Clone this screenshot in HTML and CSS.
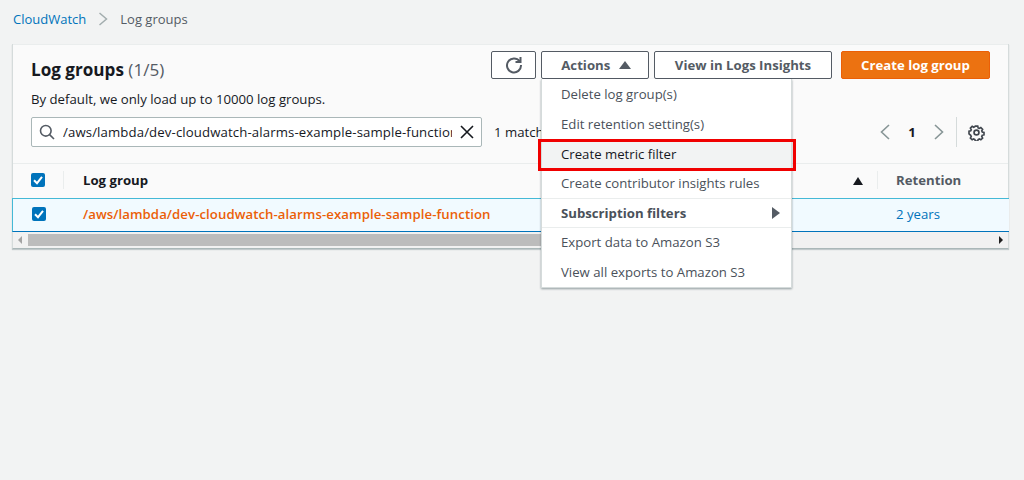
FILE: index.html
```html
<!DOCTYPE html>
<html>
<head>
    <title>Log groups</title>
    <link rel="stylesheet" href="styles.css">
</head>
<body>
    <nav class="crumbs">
        <a href="#">CloudWatch</a>
        <svg class="crumb-sep" width="10" height="14" viewBox="0 0 10 14"><path d="M1.5 1l7 6-7 6" fill="none" stroke="#a3adae" stroke-width="1.5"/></svg>
        <span>Log groups</span>
    </nav>

    <section class="panel">
        <div class="panel-head">
            <div class="title-row">
                <h1>Log groups <span class="count">(1/5)</span></h1>
                <div class="actions">
                    <button class="btn btn-icon">
                        <svg width="18" height="18" viewBox="0 0 18 18"><path d="M14.6 5.2A7 7 0 1 0 16 9" fill="none" stroke="#545b64" stroke-width="2"/><path d="M15.5 1v5h-5" fill="none" stroke="#545b64" stroke-width="2"/></svg>
                    </button>
                    <div class="menu-wrap">
                        <button class="btn btn-actions">Actions <span class="tri-up"></span></button>
                        <ul class="menu">
                            <li>Delete log group(s)</li>
                            <li>Edit retention setting(s)</li>
                            <li class="hover">Create metric filter<span class="red-box"></span></li>
                            <li>Create contributor insights rules</li>
                            <li class="sub">Subscription filters <span class="tri-right"></span></li>
                            <li>Export data to Amazon S3</li>
                            <li>View all exports to Amazon S3</li>
                        </ul>
                    </div>
                    <button class="btn btn-insights">View in Logs Insights</button>
                    <button class="btn btn-primary">Create log group</button>
                </div>
            </div>
            <p class="desc">By default, we only load up to 10000 log groups.</p>
            <div class="filter-row">
                <div class="search">
                    <svg width="16" height="16" viewBox="0 0 16 16"><circle cx="6.8" cy="6.8" r="5.3" fill="none" stroke="#545b64" stroke-width="1.6"/><path d="M10.6 10.6L15 15" stroke="#545b64" stroke-width="1.6"/></svg>
                    <span class="search-text">/aws/lambda/dev-cloudwatch-alarms-example-sample-function</span>
                    <svg width="14" height="14" viewBox="0 0 14 14"><path d="M1 1l12 12M13 1L1 13" stroke="#16191f" stroke-width="1.6"/></svg>
                </div>
                <span class="matches">1 match</span>
                <div class="pager">
                    <svg width="12" height="16" viewBox="0 0 12 16"><path d="M10 1L2.5 8l7.5 7" fill="none" stroke="#879596" stroke-width="1.6"/></svg>
                    <span class="page">1</span>
                    <svg width="12" height="16" viewBox="0 0 12 16"><path d="M2 1l7.5 7L2 15" fill="none" stroke="#879596" stroke-width="1.6"/></svg>
                    <span class="pager-sep"></span>
                    <svg width="17" height="17" viewBox="0 0 16 16"><circle cx="8" cy="8" r="2.3" fill="none" stroke="#3f454d" stroke-width="1.6"/><path d="M6.6 1h2.8l.4 1.9 1.3.6 1.7-1 2 2-1 1.7.6 1.3 1.9.4v2.8l-1.9.4-.6 1.3 1 1.7-2 2-1.7-1-1.3.6-.4 1.9H6.6l-.4-1.9-1.3-.6-1.7 1-2-2 1-1.7-.6-1.3L-.3 9.4V6.6l1.9-.4.6-1.3-1-1.7 2-2 1.7 1 1.3-.6z" transform="translate(1.2 1.2) scale(.85)" fill="none" stroke="#3f454d" stroke-width="1.8"/></svg>
                </div>
            </div>
        </div>

        <div class="table-head">
            <div class="cell-check"><span class="checkbox"><svg width="14" height="14" viewBox="0 0 14 14"><path d="M3 7.2l3 3 5-6.4" fill="none" stroke="#fff" stroke-width="2"/></svg></span></div>
            <div class="cell-name has-sep">Log group</div>
            <div class="cell-sort"><span class="tri-up dark"></span></div>
            <div class="cell-ret has-sep">Retention</div>
        </div>
        <div class="table-row">
            <div class="cell-check"><span class="checkbox"><svg width="14" height="14" viewBox="0 0 14 14"><path d="M3 7.2l3 3 5-6.4" fill="none" stroke="#fff" stroke-width="2"/></svg></span></div>
            <div class="cell-name"><a class="group-link" href="#">/aws/lambda/dev-cloudwatch-alarms-example-sample-function</a></div>
            <div class="cell-sort"></div>
            <div class="cell-ret"><a href="#">2 years</a></div>
        </div>
        <div class="scrollbar">
            <span class="arrow-left"></span>
            <span class="thumb"></span>
            <span class="arrow-right"></span>
        </div>
    </section>
</body>
</html>
```

FILE: styles.css
```css
* {
    box-sizing: border-box;
}

body {
    margin: 0;
    height: 480px;
    overflow: hidden;
    background-color: #f2f3f3;
    font-family: "Open Sans", Arial, sans-serif;
    font-size: 13.2px;
    color: #16191f;
}

a {
    color: #0073bb;
    text-decoration: none;
}

.crumbs {
    display: flex;
    align-items: center;
    height: 44px;
    padding: 0 0 6px 13px;
    font-size: 13px;
    color: #545b64;
}

.crumb-sep {
    margin: 0 12px 0 12px;
}

.panel {
    position: relative;
    width: 997px;
    height: 205px;
    margin-left: 12px;
    background-color: #fff;
    border-left: 1px solid #d5dbdb;
    border-right: 1px solid #d5dbdb;
    border-bottom: 1px solid #aab7b8;
    box-shadow: 0 1px 1px rgba(0, 33, 43, 0.2);
}

.panel-head {
    height: 120px;
    padding: 6px 18px 0;
    background-color: #fafafa;
    border-top: 1px solid #eaeded;
    border-bottom: 1px solid #eaeded;
}

.title-row {
    display: flex;
    justify-content: space-between;
    height: 28px;
}

h1 {
    margin: 7px 0 0;
    font-size: 17.1px;
    line-height: 24px;
    font-weight: 700;
}

.count {
    font-weight: 400;
    color: #545b64;
}

.actions {
    display: flex;
    gap: 5px;
}

.btn {
    height: 28px;
    padding: 0;
    font-family: inherit;
    font-size: 13.2px;
    font-weight: 700;
    color: #545b64;
    background-color: #fff;
    border: 1px solid #545b64;
    border-radius: 2px;
}

.btn-icon {
    display: flex;
    align-items: center;
    justify-content: center;
    width: 45px;
}

.btn-actions {
    width: 108px;
    padding-left: 2px;
}

.btn-insights {
    width: 178px;
}

.btn-primary {
    width: 149px;
    margin-left: 4px;
    color: #fff;
    background-color: #ec7211;
    border-color: #eb5f07;
}

.tri-up {
    display: inline-block;
    width: 0;
    height: 0;
    margin-left: 5px;
    vertical-align: 1px;
    border-left: 6px solid transparent;
    border-right: 6px solid transparent;
    border-bottom: 8px solid #545b64;
}

.tri-up.dark {
    border-bottom-color: #16191f;
    border-left-width: 5px;
    border-right-width: 5px;
}

.tri-right {
    width: 0;
    height: 0;
    border-top: 6px solid transparent;
    border-bottom: 6px solid transparent;
    border-left: 8px solid #545b64;
}

.menu-wrap {
    position: relative;
}

.menu {
    position: absolute;
    top: 28px;
    left: 0;
    z-index: 5;
    width: 251px;
    height: 209px;
    margin: 0;
    padding: 0.6px 0 0;
    list-style: none;
    background-color: #fff;
    border: 1px solid #d5dbdb;
    border-top: none;
    box-shadow: 0 1px 2px rgba(0, 28, 36, 0.4);
    color: #4a515a;
}

.menu li {
    position: relative;
    display: flex;
    align-items: center;
    justify-content: space-between;
    height: 29.6px;
    padding: 0 11px 0 19px;
}

.menu .hover {
    padding-top: 1px;
    background-color: #f2f3f3;
    color: #16191f;
}

.menu .sub {
    font-weight: 700;
    background-color: #fff;
    border-top: 1px solid #eaeded;
    border-bottom: 1px solid #eaeded;
}

.red-box {
    position: absolute;
    top: 0;
    left: -4px;
    width: 258px;
    height: 32px;
    border: 3px solid #f00000;
}

.desc {
    margin: 11px 0 0;
    line-height: 18px;
}

.filter-row {
    display: flex;
    align-items: center;
    margin-top: 9px;
}

.search {
    display: flex;
    align-items: center;
    width: 451px;
    height: 30px;
    padding: 0 7px;
    background-color: #fff;
    border: 1px solid #aab7b8;
    border-radius: 2px;
}

.search-text {
    flex: 1;
    margin: 0 8px;
    overflow: hidden;
    white-space: nowrap;
    letter-spacing: 0.12px;
}

.matches {
    margin-left: 12px;
}

.pager {
    display: flex;
    align-items: center;
    margin-left: auto;
    height: 30px;
    margin-right: 5px;
}

.page {
    width: 42px;
    text-align: center;
    font-weight: 700;
}

.pager-sep {
    width: 1px;
    height: 30px;
    margin: 0 11px 0 11px;
    background-color: #d5dbdb;
}

.table-head,
.table-row {
    display: flex;
    align-items: center;
    height: 34px;
}

.table-head {
    padding-bottom: 2px;
    font-weight: 700;
    color: #16191f;
    background-color: #fafafa;
}

.table-row {
    background-color: #f1faff;
    border-top: 1px solid #44b9d6;
    border-bottom: 1px solid #0073bb;
    margin: 0 -1px;
    padding-left: 1px;
    padding-bottom: 2px;
    border-left: 1px solid #44b9d6;
}

.cell-check {
    width: 50px;
    padding-left: 18px;
    display: flex;
}

.checkbox {
    display: block;
    width: 14px;
    height: 14px;
    background-color: #0073bb;
    border-radius: 2px;
}

.cell-name {
    width: 764px;
    padding-left: 19px;
}

.group-link {
    font-weight: 600;
    color: #eb5f07;
    letter-spacing: 0.07px;
}

.cell-sort {
    width: 50px;
    padding-left: 21px;
    padding-top: 2px;
}

.cell-ret {
    padding-left: 19px;
    color: #545b64;
}

.table-head .cell-name {
    padding-left: 20px;
}

.table-row .cell-ret {
    padding-left: 18px;
}

.has-sep {
    position: relative;
}

.has-sep::before {
    content: "";
    position: absolute;
    left: 0;
    top: 0;
    bottom: 0;
    width: 1px;
    background-color: #eaeded;
}

.scrollbar {
    display: flex;
    align-items: center;
    height: 16px;
    background-color: #f1f1f1;
}

.arrow-left {
    margin: 0 6px 0 5px;
    border-top: 4px solid transparent;
    border-bottom: 4px solid transparent;
    border-right: 4px solid #a3a3a3;
}

.thumb {
    width: 760px;
    height: 12px;
    background-color: #bcbcbc;
}

.arrow-right {
    margin-left: auto;
    margin-right: 5px;
    border-top: 4px solid transparent;
    border-bottom: 4px solid transparent;
    border-left: 4px solid #1f1f1f;
}
```
